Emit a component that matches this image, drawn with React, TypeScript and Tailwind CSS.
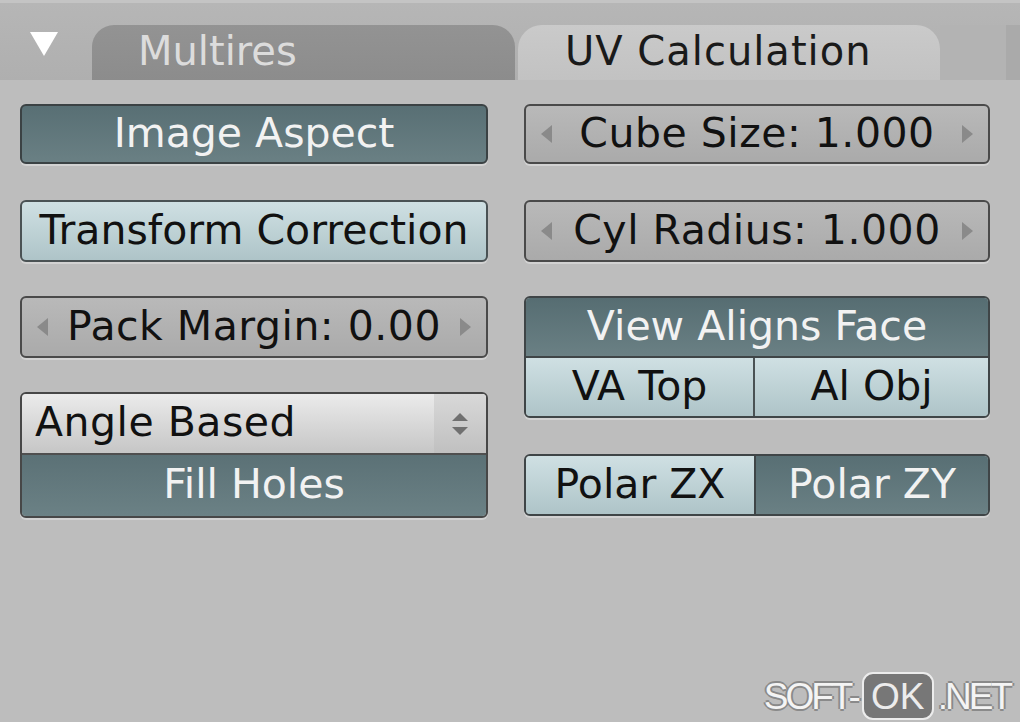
import React from 'react'

const font = "font-['DejaVu_Sans','Liberation_Sans',sans-serif]"

const dark =
  'bg-gradient-to-b from-[#586f74] to-[#6a8084] text-[#f2f2f2] border-2 border-[#3b4244]'
const light =
  'bg-gradient-to-b from-[#cfe0e3] to-[#aec4c8] text-[#111] border-2 border-[#4a5254]'

function Arrow({ dir }: { dir: 'l' | 'r' }) {
  return (
    <svg width="16" height="24" viewBox="0 0 16 24" className="shrink-0">
      {dir === 'l' ? (
        <polygon points="14,3 3,12 14,21" fill="#8a8a8a" />
      ) : (
        <polygon points="2,3 13,12 2,21" fill="#8a8a8a" />
      )}
    </svg>
  )
}

function NumField({ label, h = 'h-[62px]' }: { label: string; h?: string }) {
  return (
    <div
      className={`${h} flex items-center justify-between px-[12px] rounded-[6px] border-2 border-[#4a4a4a] bg-gradient-to-b from-[#b9b9b9] to-[#aaaaaa] shadow-[0_2px_0_#d2d2d2]`}
    >
      <Arrow dir="l" />
      <span className="text-[41px] leading-none text-[#111] tracking-[0.5px] -mt-0.5">{label}</span>
      <Arrow dir="r" />
    </div>
  )
}

export default function App() {
  return (
    <div className={`${font} relative w-[1020px] h-[722px] overflow-hidden bg-[#bdbdbd]`}>
      {/* tab header */}
      <div className="h-[80px] border-t-[3px] border-[#c4c4c4] bg-gradient-to-b from-[#b6b6b6] to-[#afafaf] flex items-end">
        <div className="w-[92px] h-full flex items-center pl-[28px] pt-[2px]">
          <svg width="32" height="30" viewBox="0 0 32 30">
            <polygon points="2,4 30,4 16,28" fill="#ffffff" />
          </svg>
        </div>
        <div className="h-[55px] w-[423px] rounded-t-[22px] bg-gradient-to-b from-[#939393] to-[#8c8c8c] pl-[46px] flex items-center">
          <span className="text-[40px] leading-none text-[#dcdcdc] -mt-1">Multires</span>
        </div>
        <div className="ml-[3px] h-[55px] w-[422px] rounded-t-[24px] bg-gradient-to-b from-[#cacaca] to-[#c2c2c2] pl-[47px] flex items-center">
          <span className="text-[40px] leading-none text-[#1a1a1a] tracking-[1px] -mt-1">UV Calculation</span>
        </div>
        <div className="flex-1 h-[55px] bg-[#b3b3b3] border-r-[14px] border-[#aaaaaa]" />
      </div>

      {/* body */}
      <div className="flex gap-[36px] pl-[20px] pt-[24px]">
        {/* left column */}
        <div className="w-[468px] flex flex-col">
          <div
            className={`${dark} h-[60px] rounded-[6px] flex items-center justify-center shadow-[0_2px_0_#d2d2d2]`}
          >
            <span className="text-[41px] leading-none -mt-0.5">Image Aspect</span>
          </div>
          <div
            className={`${light} mt-[36px] h-[62px] rounded-[6px] flex items-center justify-center shadow-[0_2px_0_#d2d2d2]`}
          >
            <span className="text-[41px] leading-none -mt-0.5">Transform Correction</span>
          </div>
          <div className="mt-[34px]">
            <NumField label="Pack Margin: 0.00" />
          </div>
          <div className="mt-[34px] rounded-[6px] border-2 border-[#474747] overflow-hidden shadow-[0_2px_0_#d2d2d2]">
            <div className="h-[61px] flex bg-gradient-to-b from-[#ebebeb] to-[#c6c6c6] border-b-2 border-[#4f4f4f]">
              <div className="flex-1 flex items-center pl-[13px]">
                <span className="text-[41px] leading-none text-[#111] tracking-[0.5px] -mt-0.5">Angle Based</span>
              </div>
              <div className="w-[52px] flex items-center justify-center bg-gradient-to-b from-[#d8d8d8] to-[#c0c0c0]">
                <svg width="22" height="28" viewBox="0 0 22 28">
                  <polygon points="11,3 19,11 3,11" fill="#707070" />
                  <polygon points="3,17 19,17 11,25" fill="#707070" />
                </svg>
              </div>
            </div>
            <div className="h-[61px] flex items-center justify-center bg-gradient-to-b from-[#5b7176] to-[#6b8185] text-[#f2f2f2]">
              <span className="text-[41px] leading-none -mt-0.5">Fill Holes</span>
            </div>
          </div>
        </div>

        {/* right column */}
        <div className="w-[466px] flex flex-col">
          <NumField label="Cube Size: 1.000" h="h-[60px]" />
          <div className="mt-[36px]">
            <NumField label="Cyl Radius: 1.000" />
          </div>
          <div className="mt-[34px] rounded-[6px] border-2 border-[#3f4547] overflow-hidden shadow-[0_2px_0_#d2d2d2]">
            <div className="h-[60px] flex items-center justify-center bg-gradient-to-b from-[#566d72] to-[#6a8084] text-[#f2f2f2] border-b-2 border-[#3f4547]">
              <span className="text-[41px] leading-none -mt-0.5">View Aligns Face</span>
            </div>
            <div className="h-[58px] flex bg-gradient-to-b from-[#cfe0e3] to-[#aec4c8] text-[#111]">
              <div className="w-[229px] flex items-center justify-center border-r-2 border-[#4a5254]">
                <span className="text-[41px] leading-none -mt-0.5">VA Top</span>
              </div>
              <div className="flex-1 flex items-center justify-center">
                <span className="text-[41px] leading-none -mt-0.5">Al Obj</span>
              </div>
            </div>
          </div>
          <div className="mt-[36px] h-[62px] rounded-[6px] border-2 border-[#3f4547] overflow-hidden flex shadow-[0_2px_0_#d2d2d2]">
            <div className="w-[230px] flex items-center justify-center bg-gradient-to-b from-[#cfe0e3] to-[#aec4c8] text-[#111] border-r-2 border-[#3f4547]">
              <span className="text-[41px] leading-none -mt-0.5">Polar ZX</span>
            </div>
            <div className="flex-1 flex items-center justify-center bg-gradient-to-b from-[#586f74] to-[#6a8084] text-[#f2f2f2]">
              <span className="text-[41px] leading-none -mt-0.5">Polar ZY</span>
            </div>
          </div>
        </div>
      </div>

      {/* watermark */}
      <div className="absolute right-[10px] bottom-[2px] flex items-center font-['Liberation_Sans',sans-serif] text-[37px] leading-none tracking-[-3px] text-[#f4f4f4] [text-shadow:-2px_0_#8a8a8a,2px_0_#8a8a8a,0_-2px_#8a8a8a,0_2px_#8a8a8a]">
        <span>SOFT-</span>
        <span className="mx-[4px] h-[48px] w-[72px] justify-center flex items-center rounded-[11px] border-2 border-[#ececec] bg-[#777777] text-[#ececec] tracking-normal [text-shadow:none]">
          OK
        </span>
        <span>.NET</span>
      </div>
    </div>
  )
}
